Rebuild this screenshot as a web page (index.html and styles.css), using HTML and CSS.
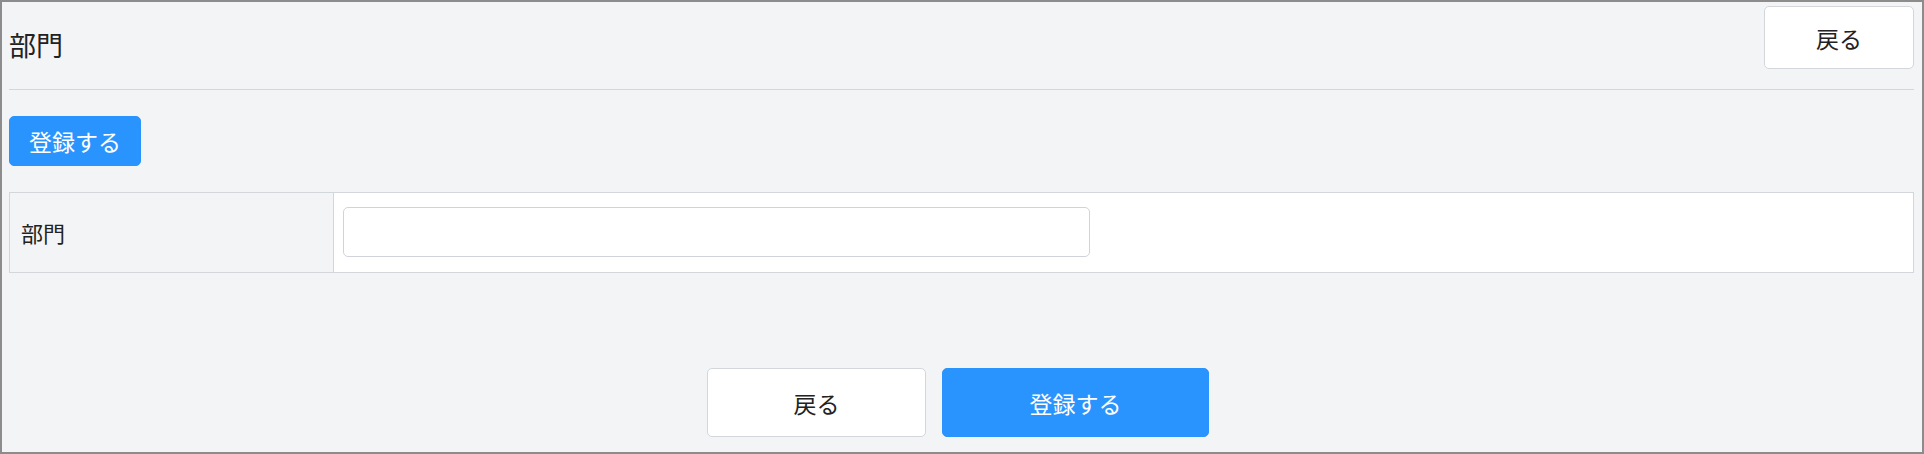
FILE: index.html
```html
<!DOCTYPE html>
<html lang="ja">
<head>
    <meta charset="UTF-8">
    <meta name="viewport" content="width=device-width, initial-scale=1.0">
    <title>部門</title>
    <link rel="stylesheet" href="styles.css">
</head>
<body>

    <div class="page">
        <!-- ヘッダー -->
        <div class="header">
            <h1 class="title">部門</h1>
            <button class="btn btn-back-top">戻る</button>
        </div>

        <button class="btn btn-primary btn-small">登録する</button>

        <!-- 入力フォーム -->
        <table class="form-table">
            <tr>
                <th>部門</th>
                <td><input type="text" class="input-text"></td>
            </tr>
        </table>

        <!-- フッターボタン -->
        <div class="footer">
            <button class="btn btn-back">戻る</button>
            <button class="btn btn-primary btn-submit">登録する</button>
        </div>
    </div>

</body>
</html>
```

FILE: styles.css
```css
html, body {
    margin: 0;
    padding: 0;
    height: 100%;
}

body {
    font-family: "Noto Sans CJK JP", "Noto Sans", sans-serif;
    background-color: #f3f4f6;
    color: #222;
    border: 2px solid #8c8c8c;
    box-sizing: border-box;
}

.page {
    padding: 4px 8px 0 7px;
}

.header {
    display: flex;
    justify-content: space-between;
    align-items: flex-start;
    padding-bottom: 20px;
    border-bottom: 1px solid #d3d7dc;
}

.title {
    margin: 20px 0 0 0;
    font-size: 27px;
    line-height: 38px;
    font-weight: normal;
}

.btn {
    font-family: "Noto Sans CJK JP", "Noto Sans", sans-serif;
    font-size: 23px;
    border-radius: 5px;
    cursor: pointer;
    padding: 0;
    box-sizing: border-box;
}

.btn-back-top,
.btn-back {
    background-color: #fff;
    color: #222;
    border: 1px solid #d3d7dc;
}

.btn-back-top {
    width: 150px;
    height: 63px;
}

.btn-primary {
    background-color: #2a94fe;
    border: 1px solid #2a94fe;
    color: #fff;
}

.btn-small {
    display: block;
    width: 132px;
    height: 50px;
    margin-top: 26px;
}

.form-table {
    width: 100%;
    margin-top: 26px;
    border-collapse: collapse;
    background-color: #fff;
}

.form-table th,
.form-table td {
    border: 1px solid #d3d7dc;
    padding: 14px 9px 15px;
    text-align: left;
}

.form-table th {
    width: 303px;
    background-color: #f3f4f6;
    font-size: 22px;
    font-weight: normal;
    padding-left: 11px;
}

.input-text {
    display: block;
    width: 747px;
    height: 50px;
    box-sizing: border-box;
    border: 1px solid #d0d4da;
    border-radius: 5px;
    background-color: #fff;
}

.footer {
    display: flex;
    justify-content: center;
    gap: 16px;
    margin-top: 95px;
    padding-right: 7px;
}

.btn-back {
    width: 219px;
    height: 69px;
}

.btn-submit {
    width: 267px;
    height: 69px;
}
```
